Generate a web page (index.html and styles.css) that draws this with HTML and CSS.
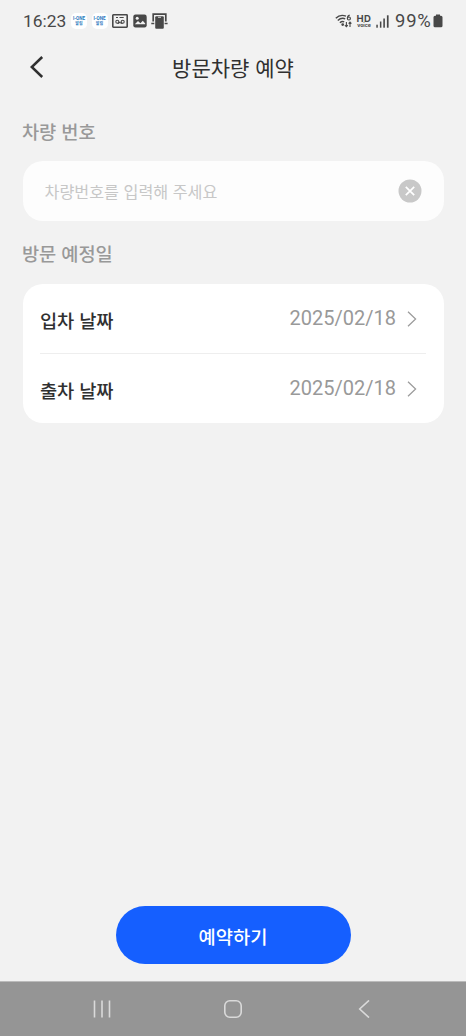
FILE: index.html
```html
<!DOCTYPE html>
<html lang="ko">
<head>
<meta charset="utf-8">
<meta name="viewport" content="width=device-width, initial-scale=1">
<title>방문차량 예약</title>
<link rel="stylesheet" href="styles.css">
</head>
<body>
<div class="screen">
  <div class="status">
    <span class="clock">16:23</span>
    <div class="notices">
      <span class="app"><b>I-ONE</b><i>알림</i></span>
      <span class="app"><b>I-ONE</b><i>알림</i></span>
      <svg width="16" height="14" viewBox="0 0 16 14" fill="none" stroke="#484848"><rect x=".8" y=".8" width="14.4" height="12.4" rx=".6" stroke-width="1.6"/><path d="M4 3.5h2M7.5 3.5h4.2" stroke-width="1"/><circle cx="5.3" cy="7.8" r="1.5" stroke-width="1.1"/><circle cx="10.7" cy="7.8" r="1.5" stroke-width="1.1"/><path d="M5.3 9.3h1.8l.8-1.5.8 1.5h2" stroke-width="1"/></svg>
      <svg width="14" height="14" viewBox="0 0 14 14"><rect x=".3" y=".5" width="13.4" height="13" rx="2.2" fill="#484848"/><path d="M1.8 10.2 5 7l2.4 2.2L9.8 6.8l2.4 2.6v.8Z" fill="#f2f2f2"/><circle cx="4.2" cy="4.2" r="1.5" fill="#f2f2f2"/></svg>
      <svg width="17" height="16" viewBox="0 0 17 16"><path d="M2.2 8.5V1.2h12.6v7.3" fill="none" stroke="#484848" stroke-width="1.7"/><path d="M.3 10.5h3M13.6 10.5h3" stroke="#484848" stroke-width="1.7"/><rect x="4.2" y="3.2" width="8.6" height="12.6" rx="1" fill="#484848"/><path d="M7 4.3h3" stroke="#f2f2f2" stroke-width=".8"/></svg>
    </div>
    <div class="signals">
      <svg width="17" height="14" viewBox="0 0 17 14" fill="none" stroke="#484848" stroke-width="1.4"><path d="M.8 4.2Q5.3-.2 11 2.2M2.8 6.5Q6.4 3.1 10.2 4.8M4.9 8.8Q7 6.8 9.2 7.9"/><circle cx="7.7" cy="10.6" r=".7" fill="#484848"/><path d="M14.7 1.1Q12.4 1.8 12.4 4.3" stroke-width="1.2"/><circle cx="13.9" cy="4.5" r="1.5" stroke-width="1.2"/><path d="M11.4 8v4.8m-1.5-1.6 1.5 1.6 1.4-1.6M15 13V8.1m-1.4 1.6L15 8.1l1.4 1.6" stroke-width="1.1"/></svg>
      <span class="hd"><b>HD</b><i>voice</i></span>
      <svg class="bars" width="13" height="13" viewBox="0 0 13 13" fill="#484848"><rect x=".3" y="9.7" width="1.5" height="3"/><rect x="3.9" y="6.5" width="1.5" height="6.2"/><rect x="7.3" y="3.5" width="1.6" height="9.2"/><rect x="10.9" y=".3" width="1.7" height="12.4"/></svg>
      <span class="percent">99%</span>
      <svg width="10" height="14" viewBox="0 0 10 14"><path d="M3 1.7V.5h4v1.2h1q1.5 0 1.5 1.5v8.6q0 1.5-1.5 1.5H2Q.5 13.3.5 11.8V3.2Q.5 1.7 2 1.7Z" fill="#484848"/></svg>
    </div>
  </div>
  <header class="header">
    <svg class="back" width="14" height="22" viewBox="0 0 14 22" fill="none" stroke="#303030" stroke-width="2.5"><path d="M12.2 1 1.8 11l10.4 10"/></svg>
    <h1>방문차량 예약</h1>
  </header>
  <main class="content">
    <h2>차량 번호</h2>
    <div class="field">
      <span>차량번호를 입력해 주세요</span>
      <svg width="24" height="24" viewBox="0 0 24 24"><circle cx="12" cy="12" r="11.5" fill="#c8c8c8"/><path d="m7.8 7.8 8.4 8.4m0-8.4-8.4 8.4" stroke="#fff" stroke-width="1.7"/></svg>
    </div>
    <h2 class="visit">방문 예정일</h2>
    <div class="card">
      <div class="row"><span class="name">입차 날짜</span><span class="date">2025/02/18</span><svg width="10" height="16" viewBox="0 0 10 16" fill="none" stroke="#9b9b9b" stroke-width="1.25"><path d="m1 .7 7.6 7.3L1 15.3"/></svg></div>
      <div class="row"><span class="name">출차 날짜</span><span class="date">2025/02/18</span><svg width="10" height="16" viewBox="0 0 10 16" fill="none" stroke="#9b9b9b" stroke-width="1.25"><path d="m1 .7 7.6 7.3L1 15.3"/></svg></div>
    </div>
  </main>
  <button class="reserve">예약하기</button>
  <nav class="navbar">
    <svg width="18" height="18" viewBox="0 0 18 18" stroke="#dadada" stroke-width="1.6"><path d="M1.5.5v17M9 .5v17M16.5.5v17"/></svg>
    <svg width="18" height="18" viewBox="0 0 18 18" fill="none" stroke="#dadada" stroke-width="1.6"><rect x=".8" y=".8" width="16.4" height="16.4" rx="5"/></svg>
    <svg width="18" height="18" viewBox="0 0 18 18" fill="none" stroke="#dadada" stroke-width="1.6"><path d="M14 .4 4.7 9l9.3 8.6"/></svg>
  </nav>
</div>
</body>
</html>
```
FILE: styles.css
```css
* { box-sizing: border-box; }
body {
  margin: 0;
  background: #f2f2f2;
  font-family: "Noto Sans CJK KR", sans-serif;
}
svg { display: block; flex: none; }
.screen { height: 1036px; display: flex; flex-direction: column; overflow: hidden; }
.status {
  height: 42px;
  flex: none;
  display: flex;
  align-items: center;
  padding: 0 23px 0;
  color: #484848;
  font-family: Roboto, sans-serif;
}
.clock { width: 48px; font-size: 17.4px; line-height: 20px; white-space: nowrap; }
.notices { display: flex; align-items: center; gap: 4.5px; }
.app {
  width: 16px;
  height: 16px;
  border-radius: 5px;
  background: #fff;
  color: #2878bd;
  display: flex;
  flex-direction: column;
  align-items: center;
  justify-content: center;
}
.app b { font-size: 4.6px; line-height: 5px; }
.app i { font: 700 4px/5px "Noto Sans CJK KR", sans-serif; }
.signals { margin-left: auto; display: flex; align-items: center; }
.hd { width: 16px; margin-left: 4px; display: flex; flex-direction: column; align-items: center; }
.hd b { font: 700 9.5px/8px Inter, sans-serif; letter-spacing: .6px; }
.hd i { font: 700 5.2px/5px Inter, sans-serif; }
.bars { margin-left: 4px; }
.percent { width: 38px; margin-left: 6px; font-size: 18.4px; line-height: 20px; letter-spacing: .8px; white-space: nowrap; }
.header { height: 50px; flex: none; display: grid; grid-template-columns: 44px 1fr 44px; align-items: center; }
.back { justify-self: end; margin-top: -1px; }
h1 { margin: 0; text-align: center; font-size: 21px; line-height: 30px; font-weight: 400; color: #303030; }
.content { padding: 25px 22.5px 0; }
h2 { margin: 0 0 0 -.5px; font-size: 18.7px; line-height: 28px; font-weight: 500; letter-spacing: -.1px; color: #999; }
.field {
  height: 60px;
  margin-top: 16px;
  padding: 0 22px;
  border-radius: 20px;
  background: #fdfdfd;
  display: flex;
  align-items: center;
  justify-content: space-between;
  color: #c7c7c7;
  font-size: 16.2px;
}
.visit { margin-top: 18px; }
.card { margin-top: 17px; padding: 0 17.5px; border-radius: 20px; background: #fff; }
.row { height: 70px; display: flex; align-items: center; padding-right: 9px; }
.row:first-child { height: 69px; }
.row + .row { border-top: 1px solid #eee; }
.name { padding-top: 2px; font-size: 18.7px; line-height: 28px; font-weight: 500; letter-spacing: -.15px; color: #303030; }
.date { margin: 0 11px 0 auto; padding-bottom: 2px; font: 20px/24px Roboto, sans-serif; color: #999; }
.reserve {
  width: 235px;
  height: 58px;
  margin: auto auto 17px;
  flex: none;
  padding: 2px 0 0;
  border: 0;
  border-radius: 29px;
  background: #155fff;
  color: #fff;
  font: 500 18.7px/28px "Noto Sans CJK KR", sans-serif;
}
.navbar {
  height: 55px;
  flex: none;
  background: #959595;
  border-top: 1px solid #bbb;
  display: flex;
  align-items: center;
  justify-content: space-between;
  padding: 0 93px;
}
```
